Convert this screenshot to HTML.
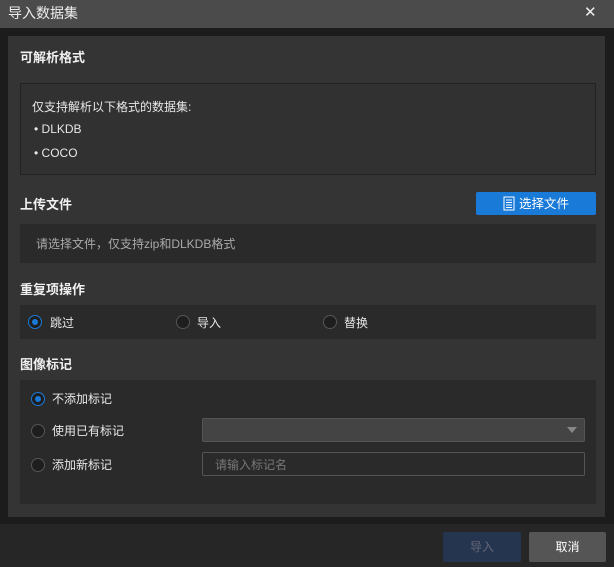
<!DOCTYPE html>
<html><head><meta charset="utf-8"><style>
*{margin:0;padding:0;box-sizing:border-box}
body{width:614px;height:567px;background:#1c1c1c;font-family:"Liberation Sans","Noto Sans CJK SC",sans-serif;font-size:12px;line-height:14px;color:#e8e8e8;position:relative;overflow:hidden}
.a{position:absolute}
.title{left:0;top:0;width:614px;height:28px;background:#4b4b4b;}
.panel{left:8px;top:36px;width:597px;height:481px;background:#343434}
.h{font-weight:bold;font-size:13px;color:#f0f0f0}
.radio{width:14px;height:14px;border-radius:50%;border:1px solid #555;background:#1e1e1e}
.radio.on{border:1.5px solid #1a7ad8;background:#1e1e1e}
.radio.on::after{content:"";position:absolute;left:2.5px;top:2.5px;width:6px;height:6px;border-radius:50%;background:#1a7ad8}
</style></head><body>
<div class="a title"></div>
<div class="a" style="left:8px;top:5px;font-size:14px;line-height:16px;color:#eee">导入数据集</div>
<div class="a" style="left:584px;top:5px;font-size:15px;line-height:16px;color:#eee">✕</div>
<div class="a panel"></div>
<div class="a h" style="left:20px;top:51px">可解析格式</div>
<div class="a" style="left:20px;top:83px;width:576px;height:92px;border:1px solid #222;background:#313131"></div>
<div class="a" style="left:32px;top:100px">仅支持解析以下格式的数据集:</div>
<div class="a" style="left:34px;top:122px">• DLKDB</div>
<div class="a" style="left:34px;top:146px">• COCO</div>
<div class="a h" style="left:20px;top:198px">上传文件</div>
<div class="a" style="left:476px;top:192px;width:120px;height:23px;background:#1a7ad8;border-radius:2px;color:#fff;font-size:12.5px;padding:5px 0 0 43px">选择文件</div>
<svg class="a" style="left:503px;top:196px" width="12" height="15"><rect x="1" y="1" width="10" height="13" fill="none" stroke="#fff" stroke-width="1"/><path d="M3 4h6M3 6.5h6M3 9h6M3 11.5h6" stroke="#fff"/></svg>
<div class="a" style="left:20px;top:224px;width:576px;height:39px;background:#2a2a2a"></div>
<div class="a" style="left:36px;top:237px;color:#aaa">请选择文件，仅支持zip和DLKDB格式</div>
<div class="a h" style="left:20px;top:283px">重复项操作</div>
<div class="a" style="left:20px;top:305px;width:576px;height:34px;background:#2a2a2a"></div>
<div class="a radio on" style="left:28px;top:315px"></div><div class="a" style="left:50px;top:316px">跳过</div>
<div class="a radio" style="left:176px;top:315px"></div><div class="a" style="left:197px;top:316px">导入</div>
<div class="a radio" style="left:323px;top:315px"></div><div class="a" style="left:344px;top:316px">替换</div>
<div class="a h" style="left:20px;top:358px">图像标记</div>
<div class="a" style="left:20px;top:380px;width:576px;height:124px;background:#2a2a2a"></div>
<div class="a radio on" style="left:31px;top:392px"></div><div class="a" style="left:52px;top:392px">不添加标记</div>
<div class="a radio" style="left:31px;top:424px"></div><div class="a" style="left:52px;top:424px">使用已有标记</div>
<div class="a radio" style="left:31px;top:458px"></div><div class="a" style="left:52px;top:458px">添加新标记</div>
<div class="a" style="left:202px;top:418px;width:383px;height:24px;background:#444;border:1px solid #555;border-radius:2px"></div>
<div class="a" style="left:567px;top:427px;width:0;height:0;border-left:5px solid transparent;border-right:5px solid transparent;border-top:6px solid #888"></div>
<div class="a" style="left:202px;top:452px;width:383px;height:24px;background:#2a2a2a;border:1px solid #555;border-radius:2px"></div>
<div class="a" style="left:215px;top:458px;color:#777">请输入标记名</div>
<div class="a" style="left:0;top:524px;width:614px;height:43px;background:#262626"></div>
<div class="a" style="left:443px;top:532px;width:78px;height:30px;background:#253550;border-radius:2px;color:#667;text-align:center;line-height:30px">导入</div>
<div class="a" style="left:529px;top:532px;width:77px;height:30px;background:#555;border-radius:2px;color:#fff;text-align:center;line-height:30px">取消</div>
</body></html>
